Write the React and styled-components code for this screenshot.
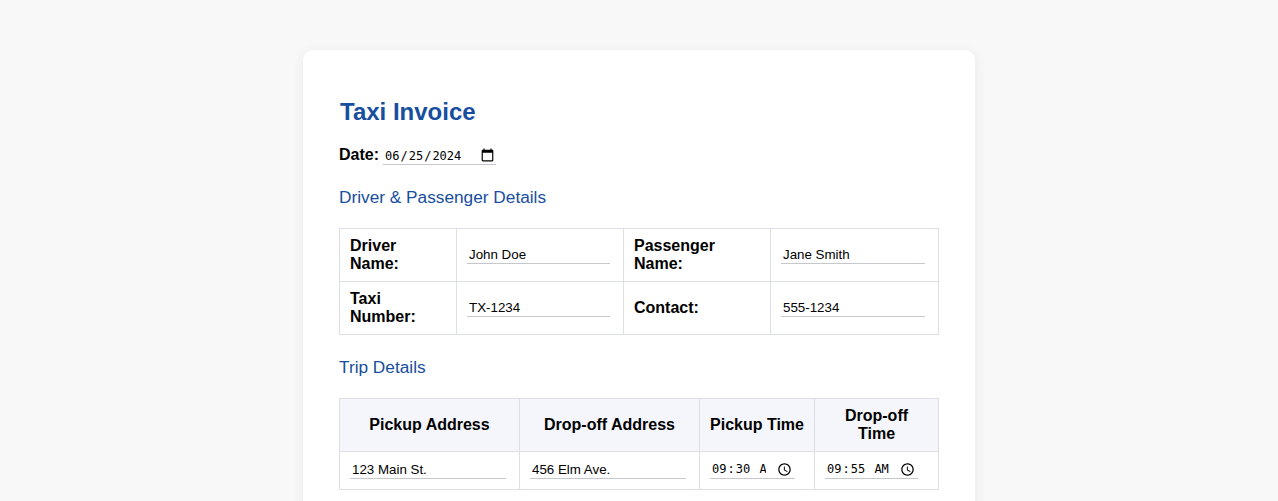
import React from 'react';
import styled, { createGlobalStyle } from 'styled-components';

const Global = createGlobalStyle`
  html, body {
    margin: 0;
    padding: 0;
    overflow: hidden;
    height: 501px;
    background: #f8f8f8;
    font-family: "Liberation Sans", Arial, sans-serif;
  }
`

const Card = styled.div`
  box-sizing: border-box;
  width: 672px;
  margin: 50px auto 0;
  padding: 48px 36px 36px;
  background: #fff;
  border-radius: 10px;
  box-shadow: 0 2px 12px rgba(0, 0, 0, 0.07);
`

const Title = styled.h1`
  margin: 0 0 20px;
  padding-left: 1px;
  font-size: 24px;
  line-height: 28px;
  font-weight: 700;
  color: #174e9e;
`

const DateRow = styled.div`
  display: flex;
  align-items: center;
  gap: 4px;
  height: 20px;
`

const DateLabel = styled.label`
  margin-bottom: 2px;
  font-size: 16px;
  font-weight: 700;
  color: #000;
`

const Section = styled.h2`
  margin: ${(props) => props.$top}px 0 21px;
  font-size: 17.25px;
  line-height: 20px;
  font-weight: 400;
  color: #174e9e;
`

const Table = styled.table`
  width: 599px;
  border-collapse: collapse;
  table-layout: fixed;
`

const Cell = styled.td`
  border: 1px solid #dcdfe6;
  padding: 8px 10px;
  font-size: 16px;
  line-height: 18px;
  text-align: left;
`

const Label = styled(Cell)`
  font-weight: 700;
  color: #000;
`

const Head = styled.th`
  border: 1px solid #dcdfe6;
  background: #f4f6fb;
  padding: 8px 10px;
  font-size: 16px;
  line-height: 18px;
  font-weight: 700;
  color: #000;
  text-align: center;
`

const Field = styled.input`
  box-sizing: border-box;
  display: block;
  width: 98%;
  height: 19px;
  margin-bottom: 2px;
  padding: 3px 2px 1px;
  border: none;
  border-bottom: 1px solid #c4c7cc;
  outline: none;
  background: transparent;
  color: #000;
  font-size: 13.33px;
  font-family: "Liberation Sans", Arial, sans-serif;
`

const TripField = styled(Field)`
  padding: 2px;
`

const Stamp = styled(Field)`
  padding: 3px 1px 1px;
  font-size: 12px;
  font-family: "DejaVu Sans Mono", monospace;

  &::-webkit-calendar-picker-indicator {
    width: 15px;
    height: 15px;
    padding: 0;
    margin: 0;
  }
`

const DateField = styled(Stamp)`
  width: 113px;
`

const TimeField = styled(Stamp)`
  width: 90%;
  padding: 2px 3px 2px 1px;

  &::-webkit-calendar-picker-indicator {
    margin-left: 11px;
  }
`

const details = [
  ['Driver Name:', 'John Doe', 'Passenger Name:', 'Jane Smith'],
  ['Taxi Number:', 'TX-1234', 'Contact:', '555-1234'],
]

class App extends React.Component {
  render() {
    return (
      <>
        <Global />
        <Card>
          <Title>Taxi Invoice</Title>
          <DateRow>
            <DateLabel>Date:</DateLabel>
            <DateField type="date" defaultValue="2024-06-25" />
          </DateRow>

          <Section $top={21}>Driver &amp; Passenger Details</Section>
          <Table>
            <colgroup>
              <col style={{ width: 117 }} />
              <col style={{ width: 167 }} />
              <col style={{ width: 147 }} />
              <col style={{ width: 168 }} />
            </colgroup>
            <tbody>
              {details.map((row) => (
                <tr key={row[0]}>
                  <Label>{row[0]}</Label>
                  <Cell><Field defaultValue={row[1]} /></Cell>
                  <Label>{row[2]}</Label>
                  <Cell><Field defaultValue={row[3]} /></Cell>
                </tr>
              ))}
            </tbody>
          </Table>

          <Section $top={22}>Trip Details</Section>
          <Table>
            <colgroup>
              <col style={{ width: 180 }} />
              <col style={{ width: 180 }} />
              <col style={{ width: 115 }} />
              <col style={{ width: 124 }} />
            </colgroup>
            <thead>
              <tr>
                <Head>Pickup Address</Head>
                <Head>Drop-off Address</Head>
                <Head>Pickup Time</Head>
                <Head>Drop-off Time</Head>
              </tr>
            </thead>
            <tbody>
              <tr>
                <Cell><TripField defaultValue="123 Main St." /></Cell>
                <Cell><TripField defaultValue="456 Elm Ave." /></Cell>
                <Cell><TimeField type="time" defaultValue="09:30" /></Cell>
                <Cell><TimeField type="time" defaultValue="09:55" /></Cell>
              </tr>
            </tbody>
          </Table>
        </Card>
      </>
    )
  }
}

export default App
